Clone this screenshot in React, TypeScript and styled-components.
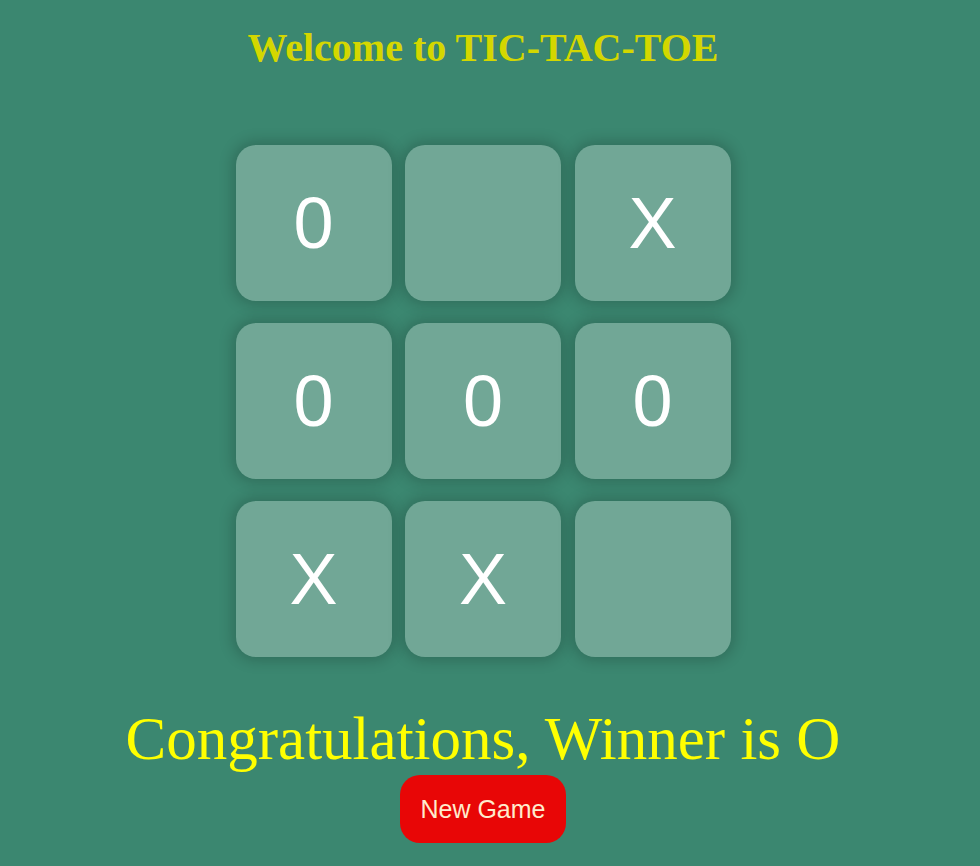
import React from "react";
import styled, { createGlobalStyle } from "styled-components";

const Global = createGlobalStyle`
  html, body { margin: 0; padding: 0; background: #3b8770; }
  body { font-family: "Liberation Serif", "Times New Roman", serif; }
`;

const Page = styled.main`
  width: 966px;
  min-height: 866px;
  display: flex;
  flex-direction: column;
  align-items: center;
`;

const Title = styled.h1`
  margin: 24px 0 0;
  font-family: "Liberation Serif", serif;
  font-weight: bold;
  font-size: 40px;
  line-height: 48px;
  color: #d4d700;
`;

const Board = styled.div`
  margin-top: 73px;
  display: grid;
  grid-template-columns: repeat(3, 156px);
  column-gap: 13.5px;
  row-gap: 22px;
`;

const Cell = styled.button`
  width: 156px;
  height: 156px;
  border: none;
  border-radius: 20px;
  background: #71a796;
  box-shadow: 0 0 14px 4px rgba(0, 0, 0, 0.18);
  color: #ffffff;
  font-family: "Liberation Sans", Arial, sans-serif;
  font-size: 72px;
  display: flex;
  align-items: center;
  justify-content: center;
  padding: 0;
  cursor: pointer;
`;

const Winner = styled.div`
  margin-top: 46px;
  font-family: "Liberation Serif", serif;
  font-size: 61px;
  line-height: 72px;
  color: #ffff00;
`;

const NewGame = styled.button`
  width: 166px;
  height: 68px;
  border: none;
  border-radius: 20px;
  background: #e80606;
  color: #ffebcd;
  font-family: "Liberation Sans", Arial, sans-serif;
  font-size: 25px;
  cursor: pointer;
`;

const cells = ["0", "", "X", "0", "0", "0", "X", "X", ""];

export default function App() {
  return (
    <>
      <Global />
      <Page>
        <Title>Welcome to TIC-TAC-TOE</Title>
        <Board>
          {cells.map((c, i) => (
            <Cell key={i}>{c}</Cell>
          ))}
        </Board>
        <Winner>Congratulations, Winner is O</Winner>
        <NewGame>New Game</NewGame>
      </Page>
    </>
  );
}
